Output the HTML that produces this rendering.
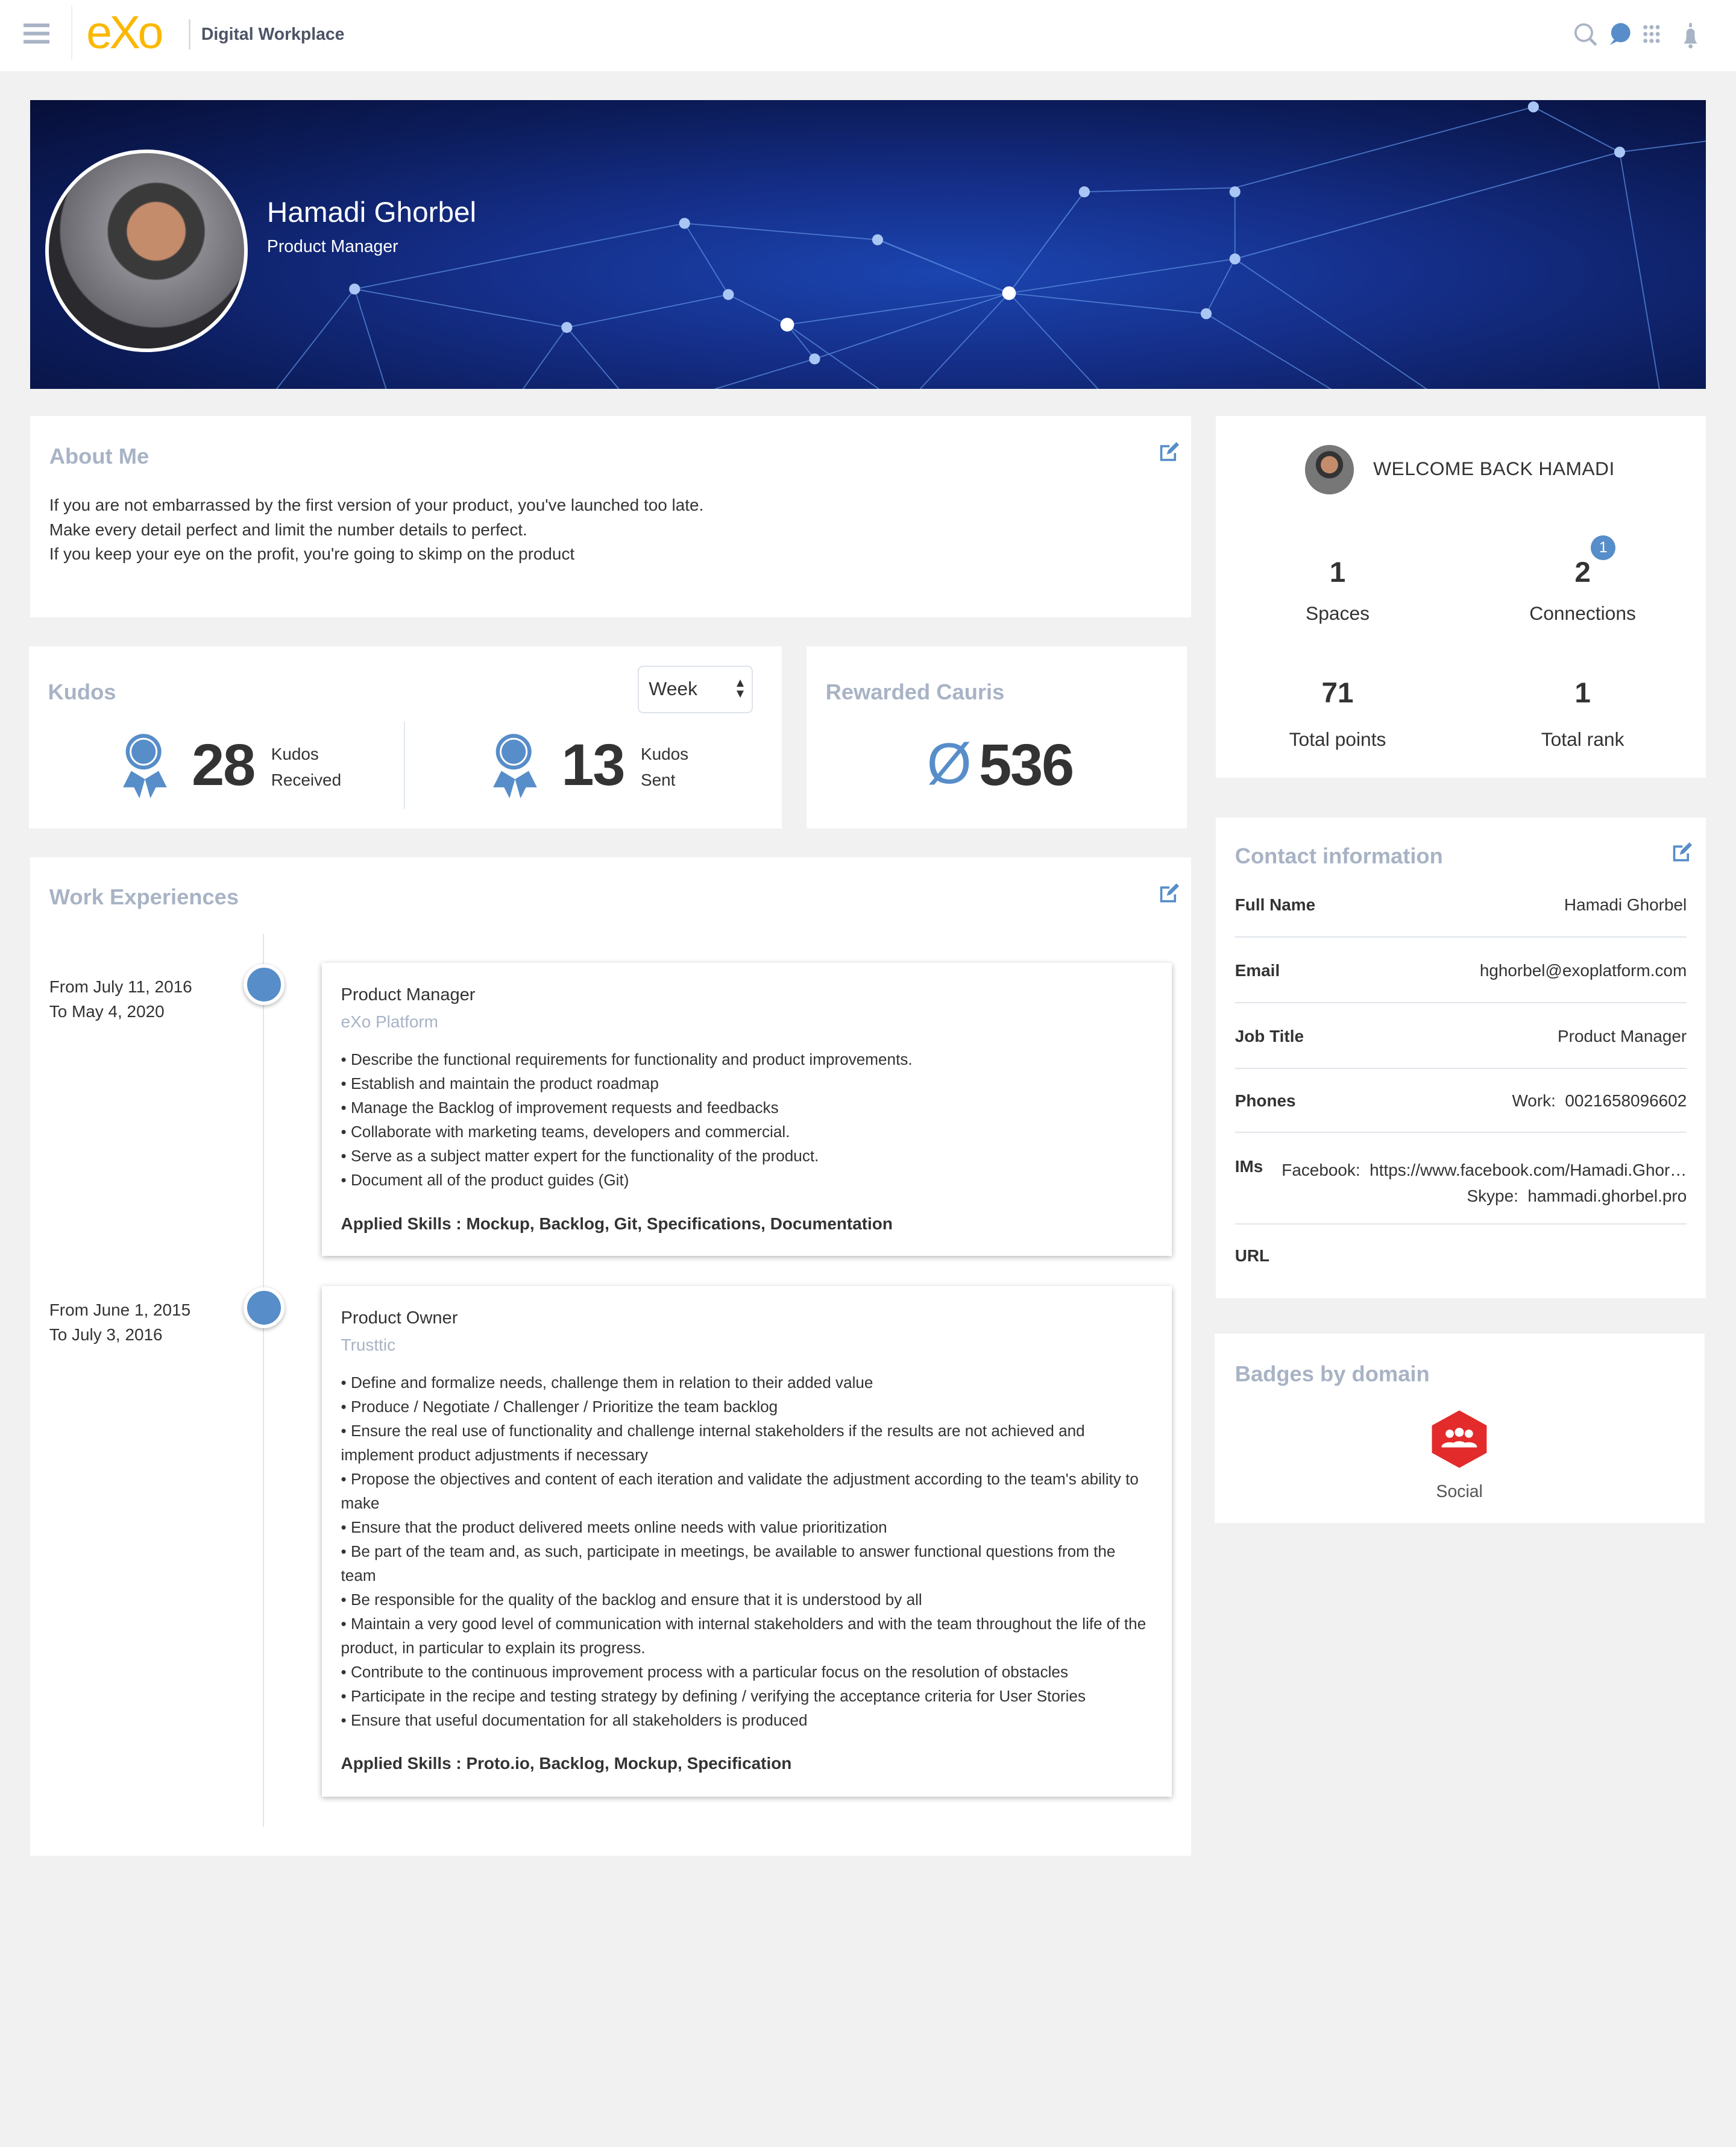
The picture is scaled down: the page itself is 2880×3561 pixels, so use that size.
<!DOCTYPE html>
<html><head><meta charset="utf-8"><style>
html{zoom:2.2713}
*{box-sizing:border-box;margin:0;padding:0}
body{width:1268px;height:1568px;background:#f1f1f1;font-family:"Liberation Sans",Arial,sans-serif;color:#333;position:relative;overflow:hidden}
.a{position:absolute}
.card{position:absolute;background:#fff}
.h{position:absolute;font-weight:bold;font-size:16px;color:#a8b3c5}
.t{font-size:12.3px;line-height:18px}
.exp{position:absolute;background:#fff;box-shadow:0 1px 4px rgba(0,0,0,.3);padding:15px 14px;font-size:11.5px;line-height:17.6px;color:#333}
.exp .ti{font-size:12.8px}
.exp .co{color:#a8b3c5;font-size:12.3px;margin-top:2px;margin-bottom:10px}
.exp b{display:block;font-size:12.3px;margin-top:14px}
.row{position:absolute;left:14px;right:14px;font-size:12.3px;border-bottom:1px solid #e1e5ea;height:47.5px}
.row .k{position:absolute;left:0;top:17px;font-weight:bold}
.row .v{position:absolute;right:0;top:17px;text-align:right}
.dot{position:absolute;width:30px;height:30px;border-radius:50%;background:#578dc9;border:3px solid #fff;box-shadow:0 1px 3px rgba(0,0,0,.3)}
</style></head><body>
<div class="a" style="left:0;top:0;width:1268px;height:52px;background:#fff"></div>
<div class="a" style="left:17px;top:17px;width:19px;height:3px;background:#a8b3c5;box-shadow:0 6px 0 #a8b3c5,0 12px 0 #a8b3c5"></div>
<div class="a" style="left:52px;top:4px;width:1px;height:40px;background:#eee"></div>
<div class="a" style="left:63px;top:4px;font-size:34px;color:#fbb800;letter-spacing:-2px;line-height:40px">eXo</div>
<div class="a" style="left:138px;top:14px;width:1px;height:22px;background:#ddd"></div>
<div class="a" style="left:147px;top:18px;font-size:12.5px;font-weight:bold;color:#4d5466">Digital Workplace</div>
<svg class="a" style="left:1148px;top:16px" width="100" height="20" viewBox="0 0 100 20">
<circle cx="9" cy="8" r="6" fill="none" stroke="#a8b3c5" stroke-width="1.6"/><path d="M13 12l5 5" stroke="#a8b3c5" stroke-width="2"/>
<circle cx="36" cy="8" r="7" fill="#578dc9"/><path d="M28 17l4-5 2 2z" fill="#578dc9"/>
<g fill="#a8b3c5"><circle cx="54" cy="4" r="1.5"/><circle cx="58.5" cy="4" r="1.5"/><circle cx="63" cy="4" r="1.5"/><circle cx="54" cy="9" r="1.5"/><circle cx="58.5" cy="9" r="1.5"/><circle cx="63" cy="9" r="1.5"/><circle cx="54" cy="14" r="1.5"/><circle cx="58.5" cy="14" r="1.5"/><circle cx="63" cy="14" r="1.5"/>
<path d="M82 16h10c-2-2-2-4-2-8a3 3 0 0 0-6 0c0 4 0 6-2 8z"/><circle cx="87" cy="18" r="1.5"/><rect x="86" y="1" width="2" height="3"/></g>
</svg>
<div class="a" style="left:22px;top:73px;width:1224px;height:211px;background:radial-gradient(ellipse at 55% 60%,#1b45b0 0%,#152f8a 35%,#0c1c5a 70%,#070f38 100%);overflow:hidden">
<svg width="1224" height="211" style="position:absolute;left:0;top:0">
<g stroke="#5b8de0" stroke-width=".8" opacity=".75" fill="none">
<path d="M237 138L478 90 619 102 715 141 770 67 880 64 1098 5 1161 38 1224 30"/>
<path d="M237 138L392 166 510 142 553 164 573 189 715 141 859 156 880 116 1161 38"/>
<path d="M715 141L770 67M715 141L880 116M715 141L620 102M715 141L553 164M478 90L510 142M880 64L880 116M880 116L1161 38M237 138L180 211M237 138L260 211M573 189L500 211M553 164L620 211M715 141L650 211M715 141L780 211M859 156L950 211M1161 38L1190 211M1098 5L1161 38M880 116L1020 211M392 166L360 211M392 166L430 211"/>
</g>
<g fill="#a9c6f4"><circle cx="237" cy="138" r="4"/><circle cx="478" cy="90" r="4"/><circle cx="619" cy="102" r="4"/><circle cx="510" cy="142" r="4"/><circle cx="392" cy="166" r="4"/><circle cx="573" cy="189" r="4"/><circle cx="770" cy="67" r="4"/><circle cx="880" cy="67" r="4"/><circle cx="880" cy="116" r="4"/><circle cx="859" cy="156" r="4"/><circle cx="1098" cy="5" r="4"/><circle cx="1161" cy="38" r="4"/></g>
<circle cx="715" cy="141" r="5" fill="#fff"/><circle cx="553" cy="164" r="5" fill="#fff"/>
</svg>
</div>
<div class="a" style="left:33px;top:109px;width:148px;height:148px;border-radius:50%;border:3px solid #fff;background:radial-gradient(circle at 55% 40%,#c58c6c 0 18%,#3a3a3a 19% 30%,#8a8a90 31%,#6a6a70 60%,#2a2a2e 61%);overflow:hidden"></div>
<div class="a" style="left:195px;top:143px;font-size:21px;color:#fff">Hamadi Ghorbel</div>
<div class="a" style="left:195px;top:173px;font-size:12.5px;color:#fff">Product Manager</div>
<div class="card" style="left:22px;top:304px;width:848px;height:147px">
<div class="h" style="left:14px;top:20px">About Me</div>
<svg class="a" style="left:824px;top:18px" width="16" height="16" viewBox="0 0 16 16"><path d="M12 9v5H2V4h6" fill="none" stroke="#578dc9" stroke-width="1.6"/><path d="M6 10l1-3 6-6 2 2-6 6z" fill="#578dc9"/></svg>
<div class="a t" style="left:14px;top:56px">If you are not embarrassed by the first version of your product, you've launched too late.<br>Make every detail perfect and limit the number details to perfect.<br>If you keep your eye on the profit, you're going to skimp on the product</div>
</div>
<div class="card" style="left:21px;top:472px;width:550px;height:133px">
<div class="h" style="left:14px;top:24px">Kudos</div>
<div class="a" style="left:445px;top:14px;width:84px;height:35px;border:1px solid #dde3ea;border-radius:4px;font-size:14px;padding:8px 7px">Week<span style="position:absolute;right:4px;top:8px;font-size:9px;line-height:8px">▲<br>▼</span></div>
<div class="a" style="left:274px;top:55px;width:1px;height:64px;background:#e1e8f0"></div>
<svg class="a" style="left:65px;top:63px" width="40" height="48" viewBox="0 0 40 48"><path d="M10 28L4 40h8l4 8 4-14M30 28l6 12h-8l-4 8-4-14" fill="#578dc9"/><circle cx="19" cy="14" r="13" fill="#578dc9"/><circle cx="19" cy="14" r="9.5" fill="none" stroke="#fff" stroke-width="1.3"/></svg>
<div class="a" style="left:119px;top:62px;font-size:43px;font-weight:bold;color:#333;letter-spacing:-1px">28</div>
<div class="a" style="left:177px;top:69px;font-size:12.3px;line-height:19px">Kudos<br>Received</div>
<svg class="a" style="left:335px;top:63px" width="40" height="48" viewBox="0 0 40 48"><path d="M10 28L4 40h8l4 8 4-14M30 28l6 12h-8l-4 8-4-14" fill="#578dc9"/><circle cx="19" cy="14" r="13" fill="#578dc9"/><circle cx="19" cy="14" r="9.5" fill="none" stroke="#fff" stroke-width="1.3"/></svg>
<div class="a" style="left:389px;top:62px;font-size:43px;font-weight:bold;color:#333;letter-spacing:-1px">13</div>
<div class="a" style="left:447px;top:69px;font-size:12.3px;line-height:19px">Kudos<br>Sent</div>
</div>
<div class="card" style="left:589px;top:472px;width:278px;height:133px">
<div class="h" style="left:14px;top:24px">Rewarded Cauris</div>
<div class="a" style="left:88px;top:62px;font-size:42px;color:#578dc9;font-weight:300">Ø</div>
<div class="a" style="left:126px;top:62px;font-size:43px;font-weight:bold;color:#333;letter-spacing:-1px">536</div>
</div>
<div class="card" style="left:22px;top:626px;width:848px;height:729px">
<div class="h" style="left:14px;top:20px">Work Experiences</div>
<svg class="a" style="left:824px;top:18px" width="16" height="16" viewBox="0 0 16 16"><path d="M12 9v5H2V4h6" fill="none" stroke="#578dc9" stroke-width="1.6"/><path d="M6 10l1-3 6-6 2 2-6 6z" fill="#578dc9"/></svg>
<div class="a" style="left:170px;top:56px;width:1px;height:652px;background:#dfe5ec"></div>
<div class="dot" style="left:156px;top:78px"></div>
<div class="dot" style="left:156px;top:314px"></div>
<div class="a t" style="left:14px;top:86px">From July 11, 2016<br>To May 4, 2020</div>
<div class="a t" style="left:14px;top:322px">From June 1, 2015<br>To July 3, 2016</div>
</div>
<div class="exp" style="left:235px;top:703px;width:621px;height:214px">
<div class="ti">Product Manager</div><div class="co">eXo Platform</div>
• Describe the functional requirements for functionality and product improvements.<br>• Establish and maintain the product roadmap<br>• Manage the Backlog of improvement requests and feedbacks<br>• Collaborate with marketing teams, developers and commercial.<br>• Serve as a subject matter expert for the functionality of the product.<br>• Document all of the product guides (Git)
<b>Applied Skills : Mockup, Backlog, Git, Specifications, Documentation</b>
</div>
<div class="exp" style="left:235px;top:939px;width:621px;height:373px;padding-right:18px">
<div class="ti">Product Owner</div><div class="co">Trusttic</div>
• Define and formalize needs, challenge them in relation to their added value<br>• Produce / Negotiate / Challenger / Prioritize the team backlog<br>• Ensure the real use of functionality and challenge internal stakeholders if the results are not achieved and implement product adjustments if necessary<br>• Propose the objectives and content of each iteration and validate the adjustment according to the team's ability to make<br>• Ensure that the product delivered meets online needs with value prioritization<br>• Be part of the team and, as such, participate in meetings, be available to answer functional questions from the team<br>• Be responsible for the quality of the backlog and ensure that it is understood by all<br>• Maintain a very good level of communication with internal stakeholders and with the team throughout the life of the product, in particular to explain its progress.<br>• Contribute to the continuous improvement process with a particular focus on the resolution of obstacles<br>• Participate in the recipe and testing strategy by defining / verifying the acceptance criteria for User Stories<br>• Ensure that useful documentation for all stakeholders is produced
<b>Applied Skills : Proto.io, Backlog, Mockup, Specification</b>
</div>
<div class="card" style="left:888px;top:304px;width:358px;height:264px;text-align:center">
<div class="a" style="left:65px;top:21px;width:36px;height:36px;border-radius:50%;background:radial-gradient(circle at 50% 40%,#c58c6c 0 22%,#333 23% 35%,#777 36%)"></div>
<div class="a" style="left:115px;top:30px;font-size:14px;letter-spacing:.2px">WELCOME BACK HAMADI</div>
<div class="a" style="left:39px;top:102px;width:100px;font-size:21px;font-weight:bold">1</div>
<div class="a" style="left:39px;top:136px;width:100px;font-size:14px">Spaces</div>
<div class="a" style="left:218px;top:102px;width:100px;font-size:21px;font-weight:bold">2</div>
<div class="a" style="left:274px;top:87px;width:18px;height:18px;border-radius:50%;background:#578dc9;color:#fff;font-size:11px;line-height:18px">1</div>
<div class="a" style="left:208px;top:136px;width:120px;font-size:14px">Connections</div>
<div class="a" style="left:39px;top:190px;width:100px;font-size:21px;font-weight:bold">71</div>
<div class="a" style="left:29px;top:228px;width:120px;font-size:14px">Total points</div>
<div class="a" style="left:218px;top:190px;width:100px;font-size:21px;font-weight:bold">1</div>
<div class="a" style="left:208px;top:228px;width:120px;font-size:14px">Total rank</div>
</div>
<div class="card" style="left:888px;top:597px;width:358px;height:351px">
<div class="h" style="left:14px;top:19px">Contact information</div>
<svg class="a" style="left:333px;top:17px" width="16" height="16" viewBox="0 0 16 16"><path d="M12 9v5H2V4h6" fill="none" stroke="#578dc9" stroke-width="1.6"/><path d="M6 10l1-3 6-6 2 2-6 6z" fill="#578dc9"/></svg>
<div class="row" style="top:40px"><span class="k">Full Name</span><span class="v">Hamadi Ghorbel</span></div>
<div class="row" style="top:88px"><span class="k">Email</span><span class="v">hghorbel@exoplatform.com</span></div>
<div class="row" style="top:136px"><span class="k">Job Title</span><span class="v">Product Manager</span></div>
<div class="row" style="top:183px"><span class="k">Phones</span><span class="v">Work:&nbsp; 0021658096602</span></div>
<div class="row" style="top:231px;height:66px"><span class="k">IMs</span><span class="v" style="line-height:19px">Facebook:&nbsp; https://www.facebook.com/Hamadi.Ghor…<br>Skype:&nbsp; hammadi.ghorbel.pro</span></div>
<div class="row" style="top:296px;border:0"><span class="k">URL</span></div>
</div>
<div class="card" style="left:887px;top:974px;width:358px;height:138px">
<div class="h" style="left:15px;top:20px">Badges by domain</div>
<svg class="a" style="left:157px;top:55px" width="44" height="44" viewBox="0 0 44 44"><path d="M22 1L42 12v20L22 43 2 32V12z" fill="#e32b2b"/><g fill="#fff"><circle cx="15" cy="18" r="3"/><circle cx="22" cy="17" r="3.3"/><circle cx="29" cy="18" r="3"/><path d="M9 28c0-5 12-5 12 0zM16 28c0-6 12-6 12 0zM23 28c0-5 12-5 12 0z"/></g></svg>
<div class="a" style="left:0;top:108px;width:358px;text-align:center;font-size:12.5px;color:#555">Social</div>
</div>
</body></html>
